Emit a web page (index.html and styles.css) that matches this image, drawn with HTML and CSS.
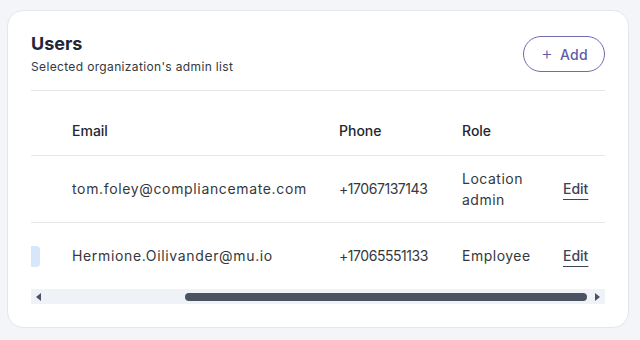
FILE: index.html
```html
<!DOCTYPE html>
<html lang="en">
<head>
<meta charset="utf-8">
<title>Users</title>
<link rel="stylesheet" href="styles.css">
</head>
<body>
<section class="card">
  <header class="card-head">
    <div class="head-text">
      <h2 class="title">Users</h2>
      <p class="sub">Selected organization's admin list</p>
    </div>
    <button class="btn-add" type="button"><span class="plus">+</span><span>Add</span></button>
  </header>
  <div class="table-scroll">
    <table class="users">
      <colgroup>
        <col class="w-sel">
        <col class="w-email">
        <col class="w-phone">
        <col class="w-role">
        <col class="w-act">
      </colgroup>
      <thead>
        <tr>
          <th></th>
          <th>Email</th>
          <th>Phone</th>
          <th>Role</th>
          <th></th>
        </tr>
      </thead>
      <tbody>
        <tr>
          <td class="sel"></td>
          <td class="email">tom.foley@compliancemate.com</td>
          <td class="phone">+17067137143</td>
          <td class="role">Location admin</td>
          <td><a class="edit" href="#">Edit</a></td>
        </tr>
        <tr>
          <td class="sel"><span class="pill"></span></td>
          <td class="email">Hermione.Oilivander@mu.io</td>
          <td class="phone">+17065551133</td>
          <td class="role">Employee</td>
          <td><a class="edit" href="#">Edit</a></td>
        </tr>
      </tbody>
    </table>
  </div>
  <div class="hscroll" aria-hidden="true">
    <span class="arrow arrow-left"></span>
    <span class="track"><span class="thumb"></span></span>
    <span class="arrow arrow-right"></span>
  </div>
</section>
</body>
</html>
```

FILE: styles.css
```css
* { box-sizing: border-box; }

html, body {
  margin: 0;
  background: #f3f5f9;
}

body {
  padding: 10px 7px;
  font-family: Inter, "Noto Sans", sans-serif;
  color: #2f3237;
}

.card {
  width: 622px;
  height: 318px;
  background: #ffffff;
  border: 1px solid #e3e6ec;
  border-radius: 16px;
  padding: 23px 23px 0;
}

.card-head {
  display: flex;
  justify-content: space-between;
  align-items: flex-start;
  border-bottom: 1px solid #e4e6ea;
  height: 57px;
}

.title {
  margin: 0;
  font-size: 18px;
  line-height: 20px;
  font-weight: 700;
  color: #22263a;
}

.sub {
  margin: 5px 0 0;
  font-size: 12px;
  line-height: 16px;
  letter-spacing: 0.35px;
  color: #34373d;
}

.btn-add {
  display: flex;
  align-items: center;
  gap: 7px;
  height: 36px;
  margin-top: 2px;
  padding: 0 16px 0 17px;
  background: #fff;
  border: 1px solid #6f6bb0;
  border-radius: 18px;
  color: #5f5ca8;
  font-family: inherit;
  font-size: 14px;
  font-weight: 500;
  letter-spacing: 0.3px;
}

.plus {
  font-size: 18px;
  font-weight: 300;
  line-height: 1;
}

.table-scroll {
  width: 574px;
  overflow-x: auto;
  direction: rtl;
  scrollbar-width: none;
}

.users {
  direction: ltr;
  border-collapse: collapse;
  table-layout: fixed;
  width: 777px;
  font-size: 14px;
}

.w-sel { width: 228px; }
.w-email { width: 267px; }
.w-phone { width: 123px; }
.w-role { width: 101px; }
.w-act { width: 58px; }

.users th {
  height: 64px;
  padding: 15px 16px 0;
  text-align: left;
  font-weight: 500;
  color: #24272c;
  border-bottom: 1px solid #e4e6ea;
}

.users td {
  height: 67px;
  padding: 0 16px;
  vertical-align: middle;
  line-height: 21px;
  color: #35383e;
  border-bottom: 1px solid #e4e6ea;
}

.users tbody tr:last-child td {
  border-bottom: none;
}

.email { letter-spacing: 0.65px; }
.phone { letter-spacing: -0.45px; }
.role { letter-spacing: 0.5px; }

.sel {
  text-align: right;
}

.pill {
  display: inline-block;
  width: 48px;
  height: 21px;
  border-radius: 4px;
  background: #d6e6fb;
  vertical-align: middle;
}

.edit {
  color: #3d4454;
  font-weight: 500;
  text-decoration: underline;
  text-underline-offset: 5px;
  text-decoration-thickness: 1px;
}

/* horizontal scrollbar of the table */
.hscroll {
  display: flex;
  align-items: center;
  width: 574px;
  height: 15px;
  background: #eff3f8;
}

.arrow {
  flex: none;
  width: 15px;
  height: 15px;
  display: flex;
  align-items: center;
  justify-content: center;
}

.arrow::before {
  content: "";
  width: 0;
  height: 0;
  border-top: 4px solid transparent;
  border-bottom: 4px solid transparent;
}

.arrow-left::before { border-right: 5px solid #4b5261; }
.arrow-right::before { border-left: 5px solid #4b5261; }

.track {
  flex: 1;
  display: flex;
  justify-content: flex-end;
  padding-right: 3px;
}

.thumb {
  width: 402px;
  height: 8px;
  border-radius: 4px;
  background: #4b5261;
}
```
